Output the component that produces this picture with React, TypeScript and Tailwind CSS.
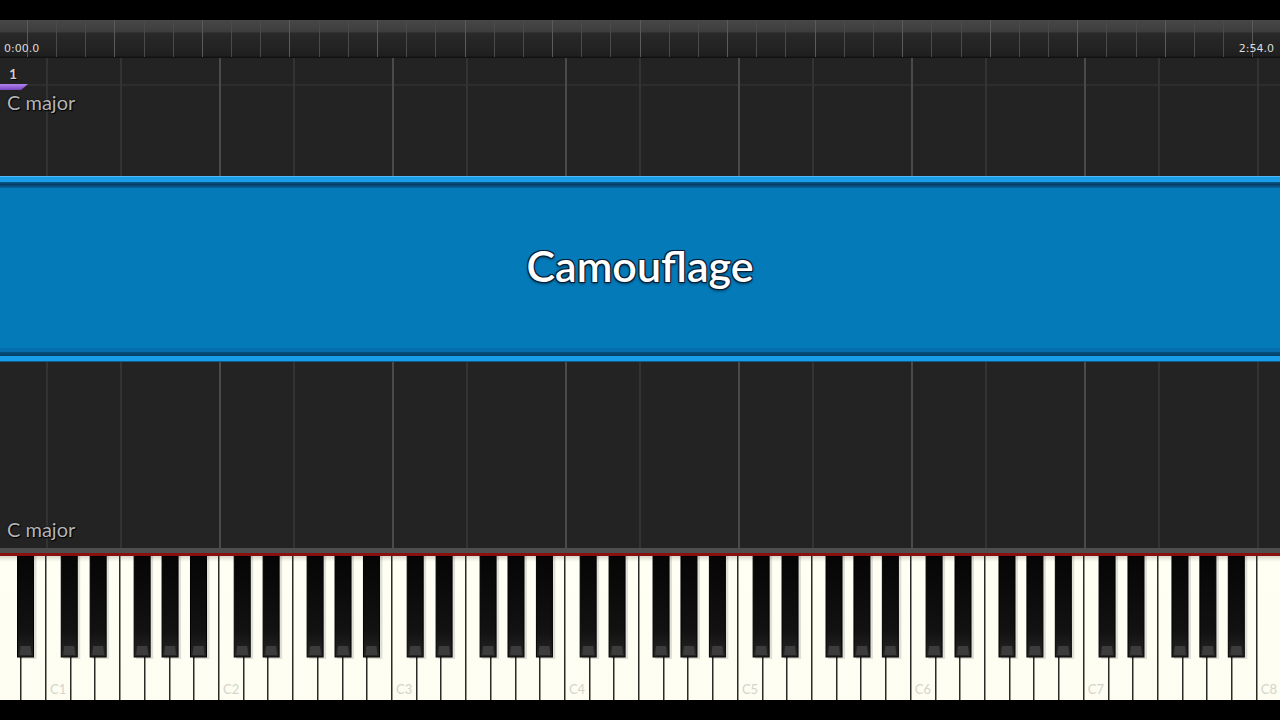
import React from "react";

const W = 24.71;
const X0 = -3.4;
const NAMES = ["A", "B", "C", "D", "E", "F", "G"];
const BLACK_OFFSET: Record<string, number> = { C: 0.94, D: 1.11, F: 0.89, G: 1.02, A: 1.17 };

const whites = Array.from({ length: 52 }, (_, i) => ({
  x: X0 + i * W,
  name: NAMES[i % 7],
  octave: Math.floor((i + 5) / 7),
  i,
}));

const gridLines = whites
  .filter((k) => k.i >= 2 && (k.name === "C" || k.name === "F"))
  .map((k) => ({ x: k.x, bright: k.name === "C" && k.octave >= 2 && k.octave <= 7 }));

function GridLines({ height, hline }: { height: number; hline?: number }) {
  return (
    <svg className="absolute inset-0" width={1280} height={height}>
      {hline !== undefined && <rect x={0} y={hline} width={1280} height={2} fill="#2d2d2d" />}
      {gridLines.map((l) => (
        <rect
          key={l.x}
          x={Math.round(l.x)}
          y={0}
          width={2}
          height={height}
          fill={l.bright ? "#4a4a4a" : "#333333"}
        />
      ))}
    </svg>
  );
}

function Timeline() {
  const ticks = Array.from({ length: 43 }, (_, i) => 26.8 + i * 29.18);
  return (
    <div className="relative h-[38px] bg-[linear-gradient(to_bottom,#474747_0px,#3d3d3d_12px,#292929_13px,#1f1f1f_36px,#111_37px)]">
      <svg className="absolute inset-0" width={1280} height={38}>
        {ticks.map((x, i) => (
          <rect key={i} x={Math.round(x)} y={0} width={1} height={37} fill={i % 3 === 0 ? "#5a5a5a" : "#4a4a4a"} />
        ))}
      </svg>
      <div className="relative flex h-full items-end justify-between px-[4px] pb-[4px] font-['DejaVu_Sans',sans-serif] text-[11px] leading-none text-[#dcdcdc]">
        <span>0:00.0</span>
        <span className="pr-[2px]">2:54.0</span>
      </div>
    </div>
  );
}

const labelCls =
  "font-['Lato',sans-serif] text-[20px] leading-none text-[#b4b4b4] [text-shadow:1px_1px_1px_#000,0_0_2px_#000]";

function TopGrid() {
  return (
    <div className="relative h-[118px] bg-[#232323]">
      <GridLines height={118} hline={26} />
      <div className="relative flex flex-col items-start pl-[7px] pt-[9px]">
        <span className="pl-[2px] font-['Lato',sans-serif] text-[14px] font-bold leading-none text-[#cfcfcf] [text-shadow:1px_1px_1px_#000]">
          1
        </span>
        <svg width={30} height={8} className="-ml-[7px] mt-[3px]">
          <defs>
            <linearGradient id="pm" x1="0" x2="0" y1="0" y2="1">
              <stop offset="0" stopColor="#b184ee" />
              <stop offset="1" stopColor="#7a44c2" />
            </linearGradient>
          </defs>
          <polygon points="0,0 28,0 21,6 0,6" fill="url(#pm)" />
        </svg>
        <span className={labelCls}>C major</span>
      </div>
    </div>
  );
}

function BottomGrid() {
  return (
    <div className="relative h-[186px] bg-[#232323]">
      <GridLines height={186} />
      <div className="relative flex h-full items-end pb-[9px] pl-[7px]">
        <span className={labelCls}>C major</span>
      </div>
    </div>
  );
}

function TitleBand() {
  return (
    <div className="flex h-[186px] flex-col">
      <div className="h-[1px] bg-[#52b9f2]" />
      <div className="h-[5px] bg-[#1a9de8]" />
      <div className="h-[6px] bg-[linear-gradient(to_bottom,#0a5a8e,#053d64_40%,#0a66a2)]" />
      <div className="flex flex-1 items-center justify-center bg-[#047ab9]">
        <span className="pb-[6px] font-['Lato',sans-serif] text-[43px] font-semibold leading-none text-white [text-shadow:0_0_2px_#041f36,1px_1px_0_#041f36,-1px_-1px_0_#041f36,1px_-1px_0_#041f36,-1px_1px_0_#041f36,0_2px_3px_rgba(0,0,0,0.5)]">
          Camouflage
        </span>
      </div>
      <div className="h-[4px] bg-[#066ead]" />
      <div className="h-[4px] bg-[linear-gradient(to_bottom,#05507f,#043f68)]" />
      <div className="h-[5px] bg-[#1a9de8]" />
      <div className="h-[1px] bg-[#0d5c8e]" />
    </div>
  );
}

function Keyboard() {
  const blacks = whites
    .filter((k) => k.i < 51 && BLACK_OFFSET[k.name] !== undefined)
    .map((k) => ({ cx: k.x + BLACK_OFFSET[k.name] * W, key: k.i }));
  return (
    <div className="h-[144px] bg-[#fffff4]">
      <svg width={1280} height={144}>
        <defs>
          <linearGradient id="bk" x1="0" x2="0" y1="0" y2="1">
            <stop offset="0" stopColor="#050505" />
            <stop offset="0.75" stopColor="#121212" />
            <stop offset="1" stopColor="#262626" />
          </linearGradient>
          <linearGradient id="wt" x1="0" x2="0" y1="0" y2="1">
            <stop offset="0" stopColor="#d8d8cc" />
            <stop offset="0.04" stopColor="#fffff4" />
            <stop offset="1" stopColor="#fdfdf2" />
          </linearGradient>
        </defs>
        <rect x={0} y={0} width={1280} height={144} fill="url(#wt)" />
        {whites.map((k) =>
          k.i > 0 ? <rect key={k.i} x={Math.round(k.x) - 1} y={0} width={1.5} height={144} fill="#2a2a26" /> : null
        )}
        {whites
          .filter((k) => k.name === "C")
          .map((k) => (
            <text
              key={"t" + k.i}
              x={k.x + 4}
              y={138}
              fontFamily="Lato, sans-serif"
              fontSize={13}
              fill="#d4d4ca"
            >
              {"C" + k.octave}
            </text>
          ))}
        {blacks.map((b) => (
          <g key={b.key}>
            <rect x={b.cx - 6} y={0} width={17} height={103} fill="#000" opacity={0.12} />
            <rect x={b.cx - 8} y={0} width={16} height={101} fill="url(#bk)" stroke="#000" strokeWidth={1} />
            <polygon
              points={`${b.cx - 5},${90} ${b.cx + 5},${90} ${b.cx + 6},${99} ${b.cx - 6},${99}`}
              fill="#3c3c3c"
            />
          </g>
        ))}
      </svg>
    </div>
  );
}

export default function App() {
  return (
    <div className="flex h-[720px] w-[1280px] flex-col overflow-hidden bg-black">
      <div className="h-[20px] bg-black" />
      <Timeline />
      <TopGrid />
      <TitleBand />
      <BottomGrid />
      <div className="h-[5px] bg-[#4e4e4e]" />
      <div className="h-[3px] bg-[#8a0f0f]" />
      <Keyboard />
      <div className="flex-1 bg-black" />
    </div>
  );
}
